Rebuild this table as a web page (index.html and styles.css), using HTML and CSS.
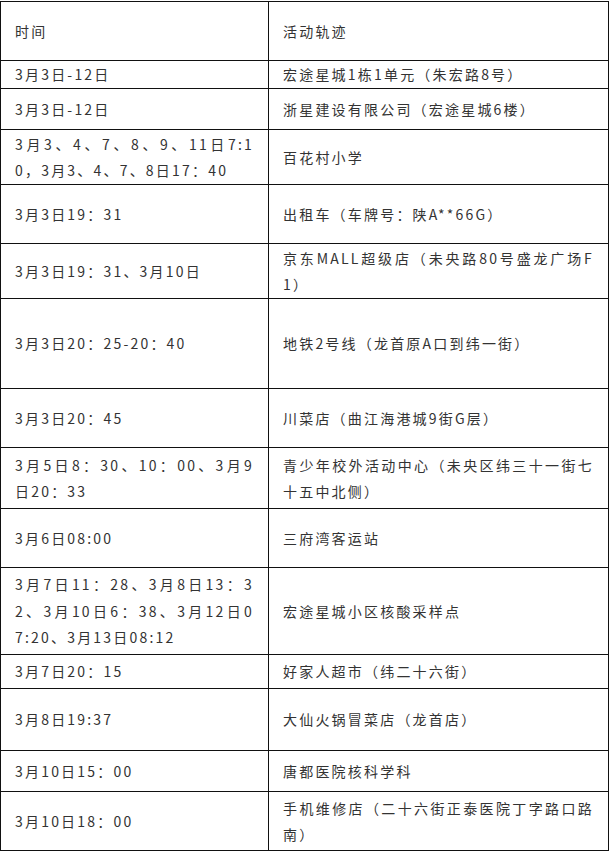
FILE: index.html
```html
<!DOCTYPE html>
<html lang="zh-CN">
<head>
<meta charset="utf-8">
<title>活动轨迹</title>
<link rel="stylesheet" href="styles.css">
</head>
<body>
<table class="trace">
  <colgroup><col class="c-time"><col class="c-place"></colgroup>
  <tbody>
    <tr class="h59"><td>时间</td><td>活动轨迹</td></tr>
    <tr class="h28"><td>3月3日-12日</td><td>宏途星城1栋1单元（朱宏路8号）</td></tr>
    <tr class="h41"><td>3月3日-12日</td><td>浙星建设有限公司（宏途星城6楼）</td></tr>
    <tr class="h55"><td><span class="jl">3月3、4、7、8、9、11日7:1</span>0，3月3、4、7、8日17：40</td><td>百花村小学</td></tr>
    <tr class="h59"><td>3月3日19：31</td><td>出租车（车牌号：陕A**66G）</td></tr>
    <tr class="h55"><td>3月3日19：31、3月10日</td><td><span class="jl">京东MALL超级店（未央路80号盛龙广场F</span>1）</td></tr>
    <tr class="h90"><td>3月3日20：25-20：40</td><td>地铁2号线（龙首原A口到纬一街）</td></tr>
    <tr class="h59"><td>3月3日20：45</td><td>川菜店（曲江海港城9街G层）</td></tr>
    <tr class="h61"><td><span class="jl">3月5日8：30、10：00、3月9</span>日20：33</td><td><span class="jl">青少年校外活动中心（未央区纬三十一街七</span>十五中北侧）</td></tr>
    <tr class="h59"><td>3月6日08:00</td><td>三府湾客运站</td></tr>
    <tr class="h87"><td><span class="jl">3月7日11：28、3月8日13：3</span><span class="jl">2、3月10日6：38、3月12日0</span>7:20、3月13日08:12</td><td>宏途星城小区核酸采样点</td></tr>
    <tr class="h34"><td>3月7日20：15</td><td>好家人超市（纬二十六街）</td></tr>
    <tr class="h62"><td>3月8日19:37</td><td>大仙火锅冒菜店（龙首店）</td></tr>
    <tr class="h41"><td>3月10日15：00</td><td>唐都医院核科学科</td></tr>
    <tr class="h59"><td>3月10日18：00</td><td><span class="jl">手机维修店（二十六街正泰医院丁字路口路</span>南）</td></tr>
  </tbody>
</table>
</body>
</html>
```
FILE: styles.css
```css
html, body {
  margin: 0;
  padding: 0;
  background: #fff;
}
body {
  padding-top: 1px;
  font-family: "Noto Sans CJK SC", "Noto Sans", sans-serif;
  font-size: 14px;
  color: #333;
}
.trace {
  border-collapse: collapse;
  table-layout: fixed;
  width: 609px;
}
.c-time { width: 268px; }
.trace td {
  border: 1px solid #111;
  padding: 0 14px;
  line-height: 26.5px;
  letter-spacing: 2.2px;
  vertical-align: middle;
  text-align: justify;
  word-break: break-all;
}
.jl {
  display: block;
  text-align: justify;
  text-align-last: justify;
}
.h28 { height: 28px; }
.h34 { height: 34px; }
.h41 { height: 41px; }
.h55 { height: 55px; }
.h59 { height: 59px; }
.h61 { height: 61px; }
.h62 { height: 62px; }
.h87 { height: 87px; }
.h90 { height: 90px; }
```
